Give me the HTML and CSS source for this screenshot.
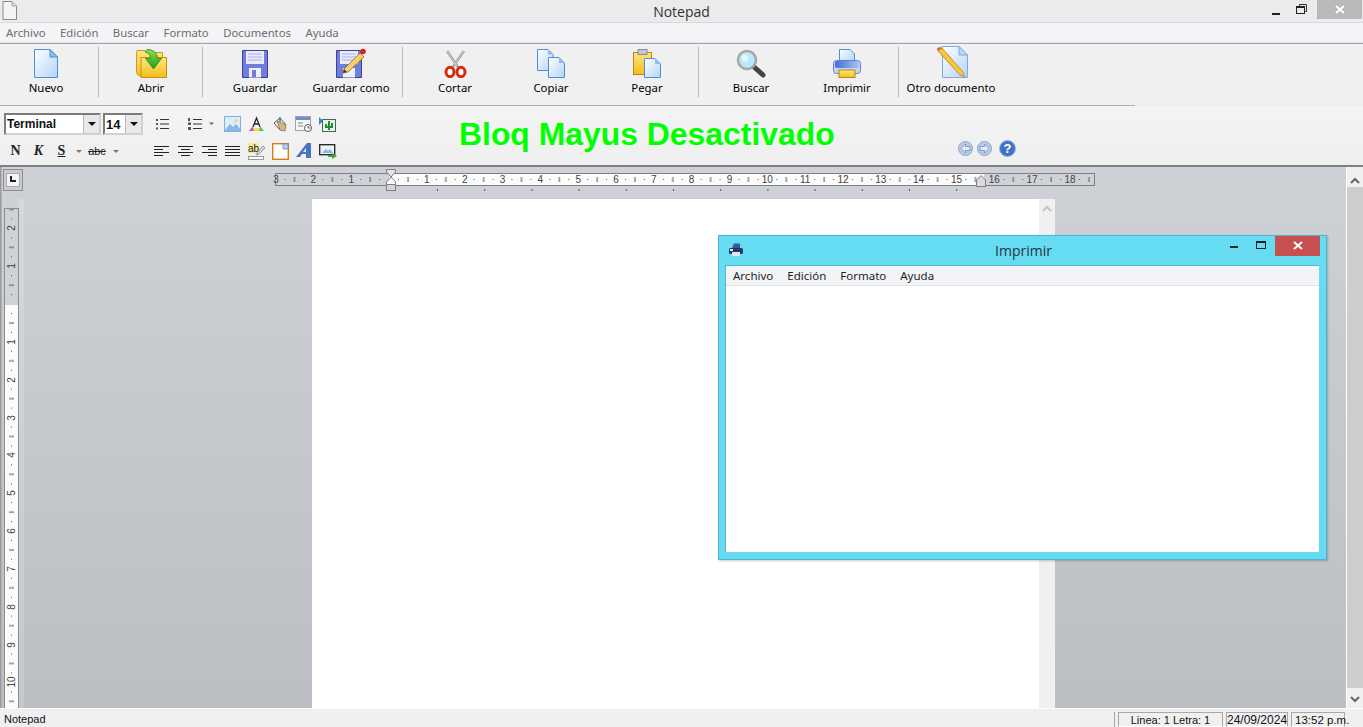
FILE: index.html
```html
<!DOCTYPE html>
<html lang="es">
<head>
<meta charset="utf-8">
<title>Notepad</title>
<link rel="stylesheet" href="styles.css">
</head>
<body>
<div class="app">
  <header class="titlebar">
    <svg class="app-icon" width="15" height="19" viewBox="0 0 15 19"><path d="M1 .5H10L14.500 5V18.500H1Z" fill="#f4f4f4" stroke="#8a8a8a"/><path d="M10 .5V5H14.500" fill="#ddd" stroke="#a0a0a0"/></svg>
    <h1 class="title">Notepad</h1>
    <div class="controls">
      <span class="ctl"><svg width="12" height="12" viewBox="0 0 12 12"><rect x="1" y="9" width="8" height="2" fill="#222"/></svg></span>
      <span class="ctl"><svg width="12" height="12" viewBox="0 0 12 12"><path d="M3.500 2.500V.5H10.500V7.500H8.500" fill="none" stroke="#333"/><rect x=".5" y="2.500" width="8" height="7" fill="none" stroke="#222"/><rect x="1" y="3" width="7" height="1" fill="#222"/></svg></span>
      <span class="close"><svg width="10" height="10" viewBox="0 0 10 10"><path d="M1 1L9 8M9 1L1 8" stroke="#fff" stroke-width="2"/></svg></span>
    </div>
  </header>

  <nav class="menubar">
    <span>Archivo</span><span>Edición</span><span>Buscar</span><span>Formato</span><span>Documentos</span><span>Ayuda</span>
  </nav>

  <section class="toolbar">
    <div class="tool tool-first">
      <div class="ico"><svg width="24" height="29" viewBox="0 0 24 29"><defs>
        <linearGradient id="pg" x1="0" y1="0" x2="1" y2="1"><stop offset="0" stop-color="#fff"/><stop offset="1" stop-color="#b4d3f5"/></linearGradient>
        <linearGradient id="yl" x1="0" y1="0" x2="0" y2="1"><stop offset="0" stop-color="#ffe680"/><stop offset="1" stop-color="#f3bd1d"/></linearGradient>
        <linearGradient id="gr" x1="0" y1="0" x2="0" y2="1"><stop offset="0" stop-color="#8ee04e"/><stop offset="1" stop-color="#1e9a1e"/></linearGradient>
        <linearGradient id="bl" x1="0" y1="0" x2="1" y2="0"><stop offset="0" stop-color="#3f6fd8"/><stop offset="1" stop-color="#a5c2f3"/></linearGradient>
      </defs><path d="M.5 .5H16L23.500 8V28.500H.5Z" fill="url(#pg)" stroke="#4d8fd6"/><path d="M16 .5V8H23.500Z" fill="#8fbdf0" stroke="#4d8fd6"/></svg></div>
      <span>Nuevo</span>
    </div>
    <i class="sep"></i>
    <div class="tool">
      <div class="ico"><svg width="31" height="29" viewBox="0 0 31 29"><path d="M.5 3.500Q.5 1.500 2 1.500H9L11 3.500H26.500V24L6 27.500Q.5 27 .5 22Z" fill="url(#yl)" stroke="#d09a12"/><path d="M5 8.500H30.500V28.500H5Z" fill="url(#yl)" stroke="#c8920f"/><path d="M11 .5Q21 .5 21.500 9.500H25.500L17.500 20L9.500 9.500H14.500Q14.500 4 9 3Z" fill="url(#gr)" stroke="#1f8c1f" stroke-width=".8"/></svg></div>
      <span>Abrir</span>
    </div>
    <i class="sep"></i>
    <div class="tool">
      <div class="ico"><svg width="26" height="28" viewBox="0 0 26 28"><path d="M.5 .5H25.500V27.500H.5Z" fill="#6f7ddb" stroke="#3c3f9e"/><rect x="4" y="1" width="18" height="13" fill="#e9ebfa"/><path d="M6 4H20M6 7H20M6 10H20" stroke="#a6aee6"/><rect x="7" y="18" width="12" height="9.500" fill="#eef0fb"/><rect x="10" y="20" width="4" height="7" fill="#6f7ddb"/></svg></div>
      <span>Guardar</span>
    </div>
    <div class="tool">
      <div class="ico"><svg width="30" height="30" viewBox="0 0 30 30"><path d="M.5 2.500H25.500V29.500H.5Z" fill="#6f7ddb" stroke="#3c3f9e"/><rect x="4" y="3" width="18" height="13" fill="#e9ebfa"/><path d="M6 6H20M6 9H20M6 12H20" stroke="#a6aee6"/><rect x="7" y="20" width="12" height="9.500" fill="#eef0fb"/><path d="M8 21L24 5L28 9L12 24L7 25Z" fill="#f7cf6b" stroke="#8a6a24" stroke-width=".8"/><path d="M8 21L7 25L11 24Z" fill="#4a3a20"/><circle cx="27" cy="3.500" r="2.800" fill="#e02020"/></svg></div>
      <span>Guardar como</span>
    </div>
    <i class="sep"></i>
    <div class="tool">
      <div class="ico"><svg width="23" height="28" viewBox="0 0 23 28"><path d="M3 1L14 17M20 1L9 17" stroke="#9a9a9a" stroke-width="2.400"/><path d="M3 1L13 16M20 1L10 16" stroke="#e4e4e4" stroke-width=".8"/><ellipse cx="6" cy="22" rx="4" ry="4.700" fill="#fff" stroke="#d92a0e" stroke-width="3"/><ellipse cx="17" cy="22" rx="4" ry="4.700" fill="#fff" stroke="#d92a0e" stroke-width="3"/></svg></div>
      <span>Cortar</span>
    </div>
    <div class="tool">
      <div class="ico"><svg width="28" height="29" viewBox="0 0 28 29"><path d="M.5 .5H11L16 5.500V21.500H.5Z" fill="url(#pg)" stroke="#4d8fd6"/><path d="M11 .5V5.500H16Z" fill="#8fbdf0"/><path d="M11.500 8.500H22L27.500 14V28.500H11.500Z" fill="url(#pg)" stroke="#4d8fd6"/><path d="M22 8.500V14H27.500Z" fill="#8fbdf0"/></svg></div>
      <span>Copiar</span>
    </div>
    <div class="tool">
      <div class="ico"><svg width="28" height="29" viewBox="0 0 28 29"><rect x=".5" y="3.500" width="18" height="22" fill="url(#yl)" stroke="#b98a10"/><rect x="5" y=".5" width="9" height="5" fill="#c9c9c9" stroke="#8c8c8c"/><path d="M11.500 9.500H22L27.500 15V28.500H11.500Z" fill="url(#pg)" stroke="#4d8fd6"/><path d="M22 9.500V15H27.500Z" fill="#8fbdf0"/></svg></div>
      <span>Pegar</span>
    </div>
    <i class="sep"></i>
    <div class="tool">
      <div class="ico"><svg width="30" height="29" viewBox="0 0 30 29"><path d="M17 17L27 26" stroke="#444" stroke-width="5" stroke-linecap="round"/><circle cx="11" cy="11" r="9" fill="#b9e8fb" stroke="#a8a8a8" stroke-width="2.600"/><circle cx="9" cy="9" r="3.500" fill="#e4f7fe"/></svg></div>
      <span>Buscar</span>
    </div>
    <div class="tool">
      <div class="ico"><svg width="28" height="29" viewBox="0 0 28 29"><path d="M6.500 .5H17L21.500 5V12H6.500Z" fill="url(#pg)" stroke="#4d8fd6"/><rect x=".5" y="11.500" width="27" height="13" rx="3" fill="#c9d3f0" stroke="#6e78c6"/><rect x="2" y="12" width="24" height="7" rx="2" fill="url(#bl)"/><rect x="6" y="21" width="16" height="7.500" fill="url(#yl)" stroke="#b98a10"/></svg></div>
      <span>Imprimir</span>
    </div>
    <i class="sep"></i>
    <div class="tool">
      <div class="ico"><svg width="33" height="32" viewBox="0 0 33 32"><path d="M7.500 .5H24L32.500 9V31.500H7.500Z" fill="url(#pg)" stroke="#7ea9dc"/><path d="M24 .5V9H32.500Z" fill="#bcd7f5" stroke="#7ea9dc"/><path d="M3 5L7 2L28 26L29.500 30.500L25 29Z" fill="#f7c93a" stroke="#a9802a" stroke-width=".8"/><path d="M3 5L7 2L5 .8L1.500 3Z" fill="#e2603c"/></svg></div>
      <span>Otro documento</span>
    </div>
  </section>

  <section class="formatbar">
    <div class="fmt-left">
      <div class="fmt-row fmt-row-top">
        <div class="fmt-fonts">
          <div class="combo combo-font"><span>Terminal</span><b class="drop"></b></div>
          <div class="combo combo-size"><span>14</span><b class="drop"></b></div>
        </div>
        <div class="cell"><svg width="14" height="14" viewBox="0 0 14 14"><path d="M5 2.500H14M5 7H14M5 11.500H14" stroke="#333"/><path d="M1 2H3V4H1ZM1 6H3V8H1ZM1 10.500H3V12.500H1Z" fill="#555"/></svg></div>
        <div class="cell cell-wide"><svg width="28" height="14" viewBox="0 0 28 14"><path d="M6 2.500H15M6 7H15M6 11.500H15" stroke="#333"/><path d="M1 1H3V4H1ZM1 5.500H4V8H1ZM1 10H4V13H1Z" fill="#555"/><path d="M22 5.500H27L24.500 8Z" fill="#666"/></svg></div>
        <div class="cell"><svg width="17" height="16" viewBox="0 0 17 16"><rect x=".5" y=".5" width="16" height="15" fill="#dcecfb" stroke="#7fb0de"/><path d="M1 14L6 8L9 11L12 8L16 13V15H1Z" fill="#86b7e6"/><circle cx="12" cy="4.500" r="1.800" fill="#f5d97a"/></svg></div>
        <div class="cell"><svg width="17" height="16" viewBox="0 0 17 16"><path d="M5 11L8.500 2L12 11M6.500 8H10.500" fill="none" stroke="#222" stroke-width="1.300"/><path d="M1 15L4.500 10.500L6.500 15Z" fill="#c84fc0"/><path d="M5.500 12H11.500V15H5.500Z" fill="#f3dc55"/><path d="M10.500 15L12.500 10.500L16 15Z" fill="#55c257"/></svg></div>
        <div class="cell"><svg width="17" height="16" viewBox="0 0 17 16"><path d="M2 7L8 2L14 9L8 14Z" fill="#f3eedd" stroke="#5b5b5b"/><path d="M5 5L14 9L13 15L8 14Z" fill="#d3b880" stroke="#7d6a45" stroke-width=".7"/><path d="M8 1V6" stroke="#4a78c0" stroke-width="1.500"/></svg></div>
        <div class="cell"><svg width="18" height="17" viewBox="0 0 18 17"><rect x=".5" y=".5" width="15" height="14" fill="#f6f6f6" stroke="#9aa4b8"/><rect x="1" y="1" width="14" height="3" fill="#6d8cc8"/><path d="M3 7H8M3 10H8" stroke="#888"/><circle cx="13" cy="12" r="3.500" fill="#fff" stroke="#555"/><path d="M13 10V12H15" stroke="#555" fill="none"/></svg></div>
        <div class="cell"><svg width="18" height="17" viewBox="0 0 18 17"><path d="M0 1L4 5L0 9Z" fill="#3c7fd0"/><rect x="3.500" y="3.500" width="13" height="12" fill="#eaf2e8" stroke="#3f6a55"/><path d="M10 5V14M7 8V11H13V7" stroke="#1f8b3d" stroke-width="2" fill="none"/></svg></div>
      </div>
      <div class="fmt-row fmt-row-bottom">
        <div class="fmt-styles">
          <span class="st st-n">N</span>
          <span class="st st-k">K</span>
          <span class="st st-s">S</span><i class="mini"></i>
          <span class="st st-abc">abc</span><i class="mini"></i>
        </div>
        <div class="cell"><svg width="15" height="12" viewBox="0 0 15 12"><path d="M0 1.500H15M0 4.500H9M0 7.500H15M0 10.500H9" stroke="#222"/></svg></div>
        <div class="cell"><svg width="15" height="12" viewBox="0 0 15 12"><path d="M0 1.500H15M3 4.500H12M0 7.500H15M3 10.500H12" stroke="#222"/></svg></div>
        <div class="cell"><svg width="15" height="12" viewBox="0 0 15 12"><path d="M0 1.500H15M6 4.500H15M0 7.500H15M6 10.500H15" stroke="#222"/></svg></div>
        <div class="cell"><svg width="15" height="12" viewBox="0 0 15 12"><path d="M0 1.500H15M0 4.500H15M0 7.500H15M0 10.500H15" stroke="#222"/></svg></div>
        <div class="cell"><svg width="17" height="17" viewBox="0 0 17 17"><rect x="0" y="0" width="10" height="10" fill="#f3ea8e"/><text class="svg-ab" x="0" y="9">ab</text><path d="M9 10L15 3L17 5L11 11L8 12Z" fill="#dcdcdc" stroke="#777" stroke-width=".7"/><rect x=".5" y="13.500" width="15" height="3" fill="#fff" stroke="#999"/></svg></div>
        <div class="cell"><svg width="17" height="17" viewBox="0 0 17 17"><rect x=".7" y=".7" width="15.600" height="15.600" fill="#fff" stroke="#d97b1e" stroke-width="1.400"/><path d="M11 1V6H16V1Z" fill="#bcd3ee" stroke="#557fb0" stroke-width=".7"/></svg></div>
        <div class="cell"><svg width="16" height="16" viewBox="0 0 16 16"><path d="M0 14L11 0H15V15H10V11H6L4 14Z" fill="#4874c8"/><path d="M7 9H10V5Z" fill="#e6eefb"/></svg></div>
        <div class="cell"><svg width="18" height="15" viewBox="0 0 18 15"><rect x=".7" y=".7" width="15" height="10" fill="#eaf3fc" stroke="#222" stroke-width="1.300"/><path d="M3 9L7 5L9 7L11 5L14 9Z" fill="#86b7e6"/><path d="M9 11H13V9L18 12L13 15V13H9Z" fill="#3ca63c"/></svg></div>
      </div>
    </div>
    <div class="banner">Bloq Mayus Desactivado</div>
    <div class="helpers">
      <span class="nav-btn"><svg width="13" height="13" viewBox="0 0 13 13"><path d="M6.500 2L2 6.500L6.500 11V8.500H11V4.500H6.500Z" fill="#e6ecf7" stroke="#6f8dc0" stroke-width=".8"/></svg></span>
      <span class="nav-btn"><svg width="13" height="13" viewBox="0 0 13 13"><path d="M6.500 2L11 6.500L6.500 11V8.500H2V4.500H6.500Z" fill="#e6ecf7" stroke="#6f8dc0" stroke-width=".8"/></svg></span>
      <span class="help">?</span>
    </div>
  </section>

  <main class="workspace">
    <div class="doc-area">
      <div class="corner"><span class="corner-btn"><svg width="14" height="14" viewBox="0 0 8 8"><path d="M1 0V6H7V4H3V0Z" fill="#222"/></svg></span></div>
      <div class="hruler-wrap">
        <svg class="hruler" width="820" height="21" viewBox="0 0 820 21">
          <defs>
            <pattern id="ht" x="114" y="0" width="37.830" height="14" patternUnits="userSpaceOnUse">
              <rect x="9" y="6" width="1" height="1" fill="#555"/><rect x="18.500" y="4" width="1" height="5" fill="#555"/><rect x="28" y="6" width="1" height="1" fill="#555"/>
            </pattern>
            <pattern id="tb" x="162" y="0" width="47.200" height="5" patternUnits="userSpaceOnUse"><rect x="0" y="0" width="1" height="3" fill="#555"/></pattern>
          </defs>
          <rect x=".5" y=".5" width="819" height="12" fill="#cfd2d6" stroke="#7d7f83"/>
          <rect x="114" y="1" width="595" height="11" fill="#fbfbfb"/>
          <rect x="1" y="1" width="818" height="12" fill="url(#ht)"/>
          <rect x="162" y="16" width="522" height="3" fill="url(#tb)"/>
          <g class="rnum">
            <text x="1" y="10">3</text><text x="38.300" y="10">2</text><text x="76.200" y="10">1</text>
            <text x="151.800" y="10">1</text><text x="189.700" y="10">2</text><text x="227.500" y="10">3</text><text x="265.300" y="10">4</text><text x="303.200" y="10">5</text><text x="341" y="10">6</text><text x="378.800" y="10">7</text><text x="416.600" y="10">8</text><text x="454.500" y="10">9</text><text x="492.300" y="10">10</text><text x="530.100" y="10">11</text><text x="568" y="10">12</text><text x="605.800" y="10">13</text><text x="643.600" y="10">14</text><text x="681.500" y="10">15</text><text x="719.300" y="10">16</text><text x="757.100" y="10">17</text><text x="795" y="10">18</text>
          </g>
        </svg>
        <svg class="marker-l" width="12" height="22" viewBox="0 0 12 22"><path d="M1.500 .5H10.500V3L6 8L1.500 3Z" fill="#e4e5e8" stroke="#7d7f83"/><path d="M6 8L1.500 13V15.500H10.500V13Z" fill="#fbfbfb" stroke="#7d7f83"/><rect x="1.500" y="15.500" width="9" height="6" fill="#d6d7da" stroke="#7d7f83"/></svg>
        <svg class="marker-r" width="12" height="12" viewBox="0 0 12 12"><path d="M1.500 11.500V5L6 .5L10.500 5V11.500Z" fill="#d9dadd" stroke="#7d7f83"/></svg>
      </div>
      <div class="vruler-col">
        <svg class="vruler" width="15" height="500" viewBox="0 0 15 500">
          <defs>
            <pattern id="vt" x="0" y="96" width="15" height="37.830" patternUnits="userSpaceOnUse">
              <rect x="7" y="9" width="1" height="1" fill="#555"/><rect x="5" y="18.500" width="5" height="1" fill="#555"/><rect x="7" y="28" width="1" height="1" fill="#555"/>
            </pattern>
          </defs>
          <rect x=".5" y=".5" width="14" height="520" fill="#fbfbfb" stroke="#8b8d91"/>
          <rect x="1" y="1" width="13" height="96" fill="#cfd2d6"/>
          <rect x="1" y="1" width="13" height="499" fill="url(#vt)"/>
          <g class="rnum rnum-v">
            <text transform="translate(11 20) rotate(-90)">2</text><text transform="translate(11 58) rotate(-90)">1</text>
            <text transform="translate(11 134) rotate(-90)">1</text><text transform="translate(11 172) rotate(-90)">2</text><text transform="translate(11 210) rotate(-90)">3</text><text transform="translate(11 247) rotate(-90)">4</text><text transform="translate(11 285) rotate(-90)">5</text><text transform="translate(11 323) rotate(-90)">6</text><text transform="translate(11 361) rotate(-90)">7</text><text transform="translate(11 399) rotate(-90)">8</text><text transform="translate(11 437) rotate(-90)">9</text><text transform="translate(11 474) rotate(-90)">10</text>
          </g>
        </svg>
      </div>
      <div class="page-wrap">
        <div class="page">
          <div class="page-body"></div>
          <div class="page-scroll"><svg width="10" height="7" viewBox="0 0 10 7"><path d="M1 6L5 2L9 6" fill="none" stroke="#c4c4c4" stroke-width="2"/></svg></div>
        </div>
      </div>
    </div>
    <aside class="vscroll">
      <svg width="10" height="7" viewBox="0 0 10 7"><path d="M1 6L5 2L9 6" fill="none" stroke="#666" stroke-width="2"/></svg>
      <div class="thumb"></div>
      <svg width="10" height="7" viewBox="0 0 10 7"><path d="M1 1L5 5L9 1" fill="none" stroke="#666" stroke-width="2"/></svg>
    </aside>

    <section class="win">
      <header class="win-title">
        <svg width="16" height="14" viewBox="0 0 16 14"><path d="M4 5L6 .5H12V6Z" fill="#2e5da8"/><rect x="1" y="5" width="14" height="6" rx="1.500" fill="#24385f"/><rect x="4" y="9" width="8" height="4" fill="#dfe6f2"/><rect x="2" y="6" width="3" height="2" fill="#e8eef8"/></svg>
        <h2 class="win-name">Imprimir</h2>
        <div class="win-ctl">
          <span class="wbtn"><svg width="12" height="12" viewBox="0 0 12 12"><rect x="2" y="6" width="8" height="2" fill="#222"/></svg></span>
          <span class="wbtn"><svg width="12" height="12" viewBox="0 0 12 12"><rect x="1.500" y="1.500" width="9" height="7" fill="none" stroke="#222"/><rect x="1" y="1" width="10" height="2" fill="#222"/></svg></span>
          <span class="wclose"><svg width="10" height="10" viewBox="0 0 10 10"><path d="M1 1L9 8M9 1L1 8" stroke="#fff" stroke-width="2"/></svg></span>
        </div>
      </header>
      <div class="win-client">
        <nav class="win-menu"><span>Archivo</span><span>Edición</span><span>Formato</span><span>Ayuda</span></nav>
        <div class="win-body"></div>
      </div>
    </section>
  </main>

  <footer class="statusbar">
    <span class="st-name">Notepad</span>
    <span class="st-cell st-line">Linea: 1 Letra: 1</span>
    <span class="st-cell st-date">24/09/2024</span>
    <span class="st-cell st-time">13:52 p.m.</span>
  </footer>
</div>
</body>
</html>
```
FILE: styles.css
```css
* { box-sizing: border-box; }
html, body { margin: 0; padding: 0; height: 100%; overflow: hidden; }
body { font-family: "Noto Sans", "Liberation Sans", sans-serif; color: #000; background: #f0f0f0; }
svg { display: block; flex: none; }
h1, h2 { margin: 0; font-weight: 400; }

.app { width: 1363px; height: 727px; display: flex; flex-direction: column; overflow: hidden; }

.titlebar { height: 23px; flex: none; display: grid; grid-template-columns: 1fr auto 1fr; align-items: start; background: #ebebeb; border-bottom: 1px solid #d9d9d9; }
.app-icon { margin: 1px 0 0 2px; }
.title { font-family: "Open Sans", sans-serif; font-size: 14px; line-height: 24px; color: #333; }
.controls { display: flex; justify-content: flex-end; padding-right: 1px; }
.ctl { width: 30px; height: 19px; display: flex; align-items: center; justify-content: center; }
.ctl + .ctl { margin-left: -5px; }
.close { width: 45px; height: 19px; background: #b9b9b9; display: flex; align-items: center; justify-content: center; }

.menubar { height: 20px; flex: none; display: flex; gap: 14.500px; padding-left: 6px; background: #f3f4f7; font-size: 11.300px; line-height: 20px; color: #6d6d6d; border-bottom: 1px solid #e6e6e6; }

.toolbar { height: 63px; flex: none; display: flex; padding-top: 2px; background: #f0f0f0; border-top: 1px solid #a4a4a4; position: relative; }
.toolbar::after { content: ""; position: absolute; left: 0; bottom: 0; width: 1135px; height: 1px; background: #b0b0b0; }
.tool { width: 96px; display: flex; flex-direction: column; align-items: center; font-size: 11.400px; line-height: 17px; }
.tool-first { width: 92px; }
.ico { height: 32px; display: flex; align-items: flex-end; margin-bottom: 1px; }
.sep { width: 1px; height: 50px; background: #b8b8b8; margin: 1px 4px 0 3px; }
.tool-first + .sep { margin-left: 6px; }

.formatbar { height: 61px; flex: none; display: flex; background: linear-gradient(#f4f4f5, #efefef); border-bottom: 2px solid #808080; }
.fmt-left { width: 345px; flex: none; display: flex; flex-direction: column; padding-top: 6px; }
.fmt-row { display: flex; align-items: center; flex: none; padding-left: 4px; }
.fmt-row-top { height: 24px; margin-bottom: 5px; }
.fmt-row-bottom { height: 20px; }
.fmt-fonts { width: 146px; flex: none; display: flex; gap: 2px; }
.combo { height: 22px; display: flex; align-items: center; justify-content: space-between; background: #fff; border: 2px solid; border-color: #7c7c7c #d0d0d0 #d0d0d0 #7c7c7c; font-family: "Liberation Sans", sans-serif; font-size: 12px; font-weight: 700; padding-left: 1px; color: #111; }
.combo-font { width: 97px; }
.combo-size { width: 40px; font-size: 13px; }
.drop { width: 16px; height: 18px; background: #e8e8e8; border-left: 1px solid #bbb; position: relative; }
.drop::after { content: ""; position: absolute; left: 4px; top: 7px; border: 4px solid transparent; border-top: 4px solid #111; border-bottom: 0; }
.cell { width: 23.700px; flex: none; display: flex; align-items: center; justify-content: center; }
.cell-wide { width: 47.400px; justify-content: flex-start; padding-left: 15px; margin-left: -2px; margin-right: 2px; }
.fmt-styles { width: 146px; flex: none; display: flex; align-items: center; padding-left: 4px; }
.st { width: 15px; font-family: "Liberation Serif", serif; font-size: 14px; font-weight: 700; text-align: center; color: #222; }
.st-k { margin-left: 8px; font-style: italic; }
.st-s { margin-left: 8px; text-decoration: underline; }
.st-abc { margin-left: 5px; width: 20px; font-family: "Liberation Sans", sans-serif; font-size: 11px; font-weight: 400; text-decoration: line-through; }
.mini { width: 0; height: 0; margin-left: 7px; border: 3px solid transparent; border-top: 3px solid #777; border-bottom: 0; }
.st-abc + .mini { margin-left: 6px; }
.svg-ab { font-family: "Liberation Sans", sans-serif; font-size: 10px; fill: #222; }

.banner { margin-left: 114px; width: 377px; flex: none; padding-top: 9px; font-family: "Liberation Sans", sans-serif; font-size: 31.900px; font-weight: 700; line-height: 38px; color: #00ff00; white-space: nowrap; }
.helpers { margin-left: 122px; padding-top: 34px; display: flex; align-items: flex-start; gap: 4px; }
.nav-btn { width: 15px; height: 15px; margin-top: 1px; border-radius: 50%; background: #b9c9e6; border: 1px solid #8ea6cf; display: flex; align-items: center; justify-content: center; }
.help { width: 17px; height: 17px; margin-left: 3px; border-radius: 50%; background: #3f74c4; border: 1px solid #9cb7e0; color: #fff; font-family: "Liberation Sans", sans-serif; font-size: 13px; font-weight: 700; line-height: 15px; text-align: center; }

.workspace { position: relative; height: 541px; flex: none; display: flex; background: linear-gradient(#ced1d6, #bbbec3); border-left: 1px solid #9a9a9a; }
.doc-area { flex: 1; display: grid; grid-template-columns: 22px 1fr; grid-template-rows: 32px 1fr; overflow: hidden; border-left: 1px solid #b0b2b6; }
.corner { padding: 2px 0 0 1px; }
.corner-btn { width: 20px; height: 22px; display: flex; align-items: center; justify-content: center; border: 1px solid #8b8d91; background: #c8cbd0; }
.corner-btn svg { background: #f4f4f4; padding: 2px; border: 1px solid #aaa; }
.hruler-wrap { position: relative; padding: 6px 0 0 251px; }
.hruler { overflow: visible; }
.marker-l { position: absolute; left: 361px; top: 2px; }
.marker-r { position: absolute; left: 951px; top: 8px; }
.rnum text { font-family: "Liberation Sans", sans-serif; font-size: 10px; fill: #444; text-anchor: middle; }
.vruler-col { padding: 9px 0 0 2px; background: linear-gradient(90deg, transparent 16px, rgba(255,255,255,.16) 16px); overflow: hidden; }
.page-wrap { padding-left: 288px; overflow: hidden; }
.page { width: 743px; height: 100%; display: flex; background: #fff; }
.page-body { flex: 1; }
.page-scroll { width: 16px; background: #f0f0f0; padding: 6px 0 0 3px; }

.vscroll { width: 17px; flex: none; display: flex; flex-direction: column; align-items: center; background: #f0f0f0; border-left: 1px solid #fff; padding: 10px 0 5px; }
.thumb { width: 100%; flex: 1; margin: 3px 0 8px; background: #cdcdcd; }

.win { position: absolute; left: 717px; top: 68px; width: 609px; height: 325px; display: flex; flex-direction: column; background: #66dcf3; border: 1px solid #4cb4cc; box-shadow: 1px 1px 2px rgba(0,0,0,.22); padding: 0 7px 7px 6px; }
.win-title { height: 29px; flex: none; display: grid; grid-template-columns: 1fr auto 1fr; align-items: start; margin-left: 3px; }
.win-title > svg { margin-top: 7px; }
.win-name { font-family: "Open Sans", sans-serif; font-size: 14px; line-height: 29px; color: #24333c; }
.win-ctl { display: flex; justify-content: flex-end; margin-right: -1px; }
.wbtn { width: 27px; height: 20px; display: flex; align-items: center; justify-content: center; }
.wclose { width: 45px; height: 20px; background: #c75050; display: flex; align-items: center; justify-content: center; margin-left: 1px; }
.win-client { flex: 1; display: flex; flex-direction: column; background: #fff; border: 1px solid #55b7cc; border-width: 1px 0 0 1px; }
.win-menu { height: 20px; flex: none; display: flex; gap: 14px; padding-left: 7px; background: #f3f4f7; border-bottom: 1px solid #e4e4e4; font-size: 11.500px; line-height: 20px; color: #1e1e1e; }
.win-body { flex: 1; }

.statusbar { height: 19px; flex: none; display: flex; align-items: stretch; padding-top: 3px; background: #f0f0f0; border-top: 1px solid #fff; font-family: "Liberation Sans", sans-serif; font-size: 11px; line-height: 14px; color: #111; white-space: nowrap; }
.st-name { padding-left: 4px; width: 1115px; flex: none; border-right: 1px solid #a8a8a8; }
.st-cell { border: 1px solid #a8a8a8; border-bottom-color: #fff; text-align: center; }
.st-line { margin-left: 3px; width: 105px; }
.st-date { margin-left: 3px; width: 62px; font-size: 12px; }
.st-time { margin-left: 3px; width: 54px; text-align: left; padding-left: 3px; font-size: 11.500px; }
```
